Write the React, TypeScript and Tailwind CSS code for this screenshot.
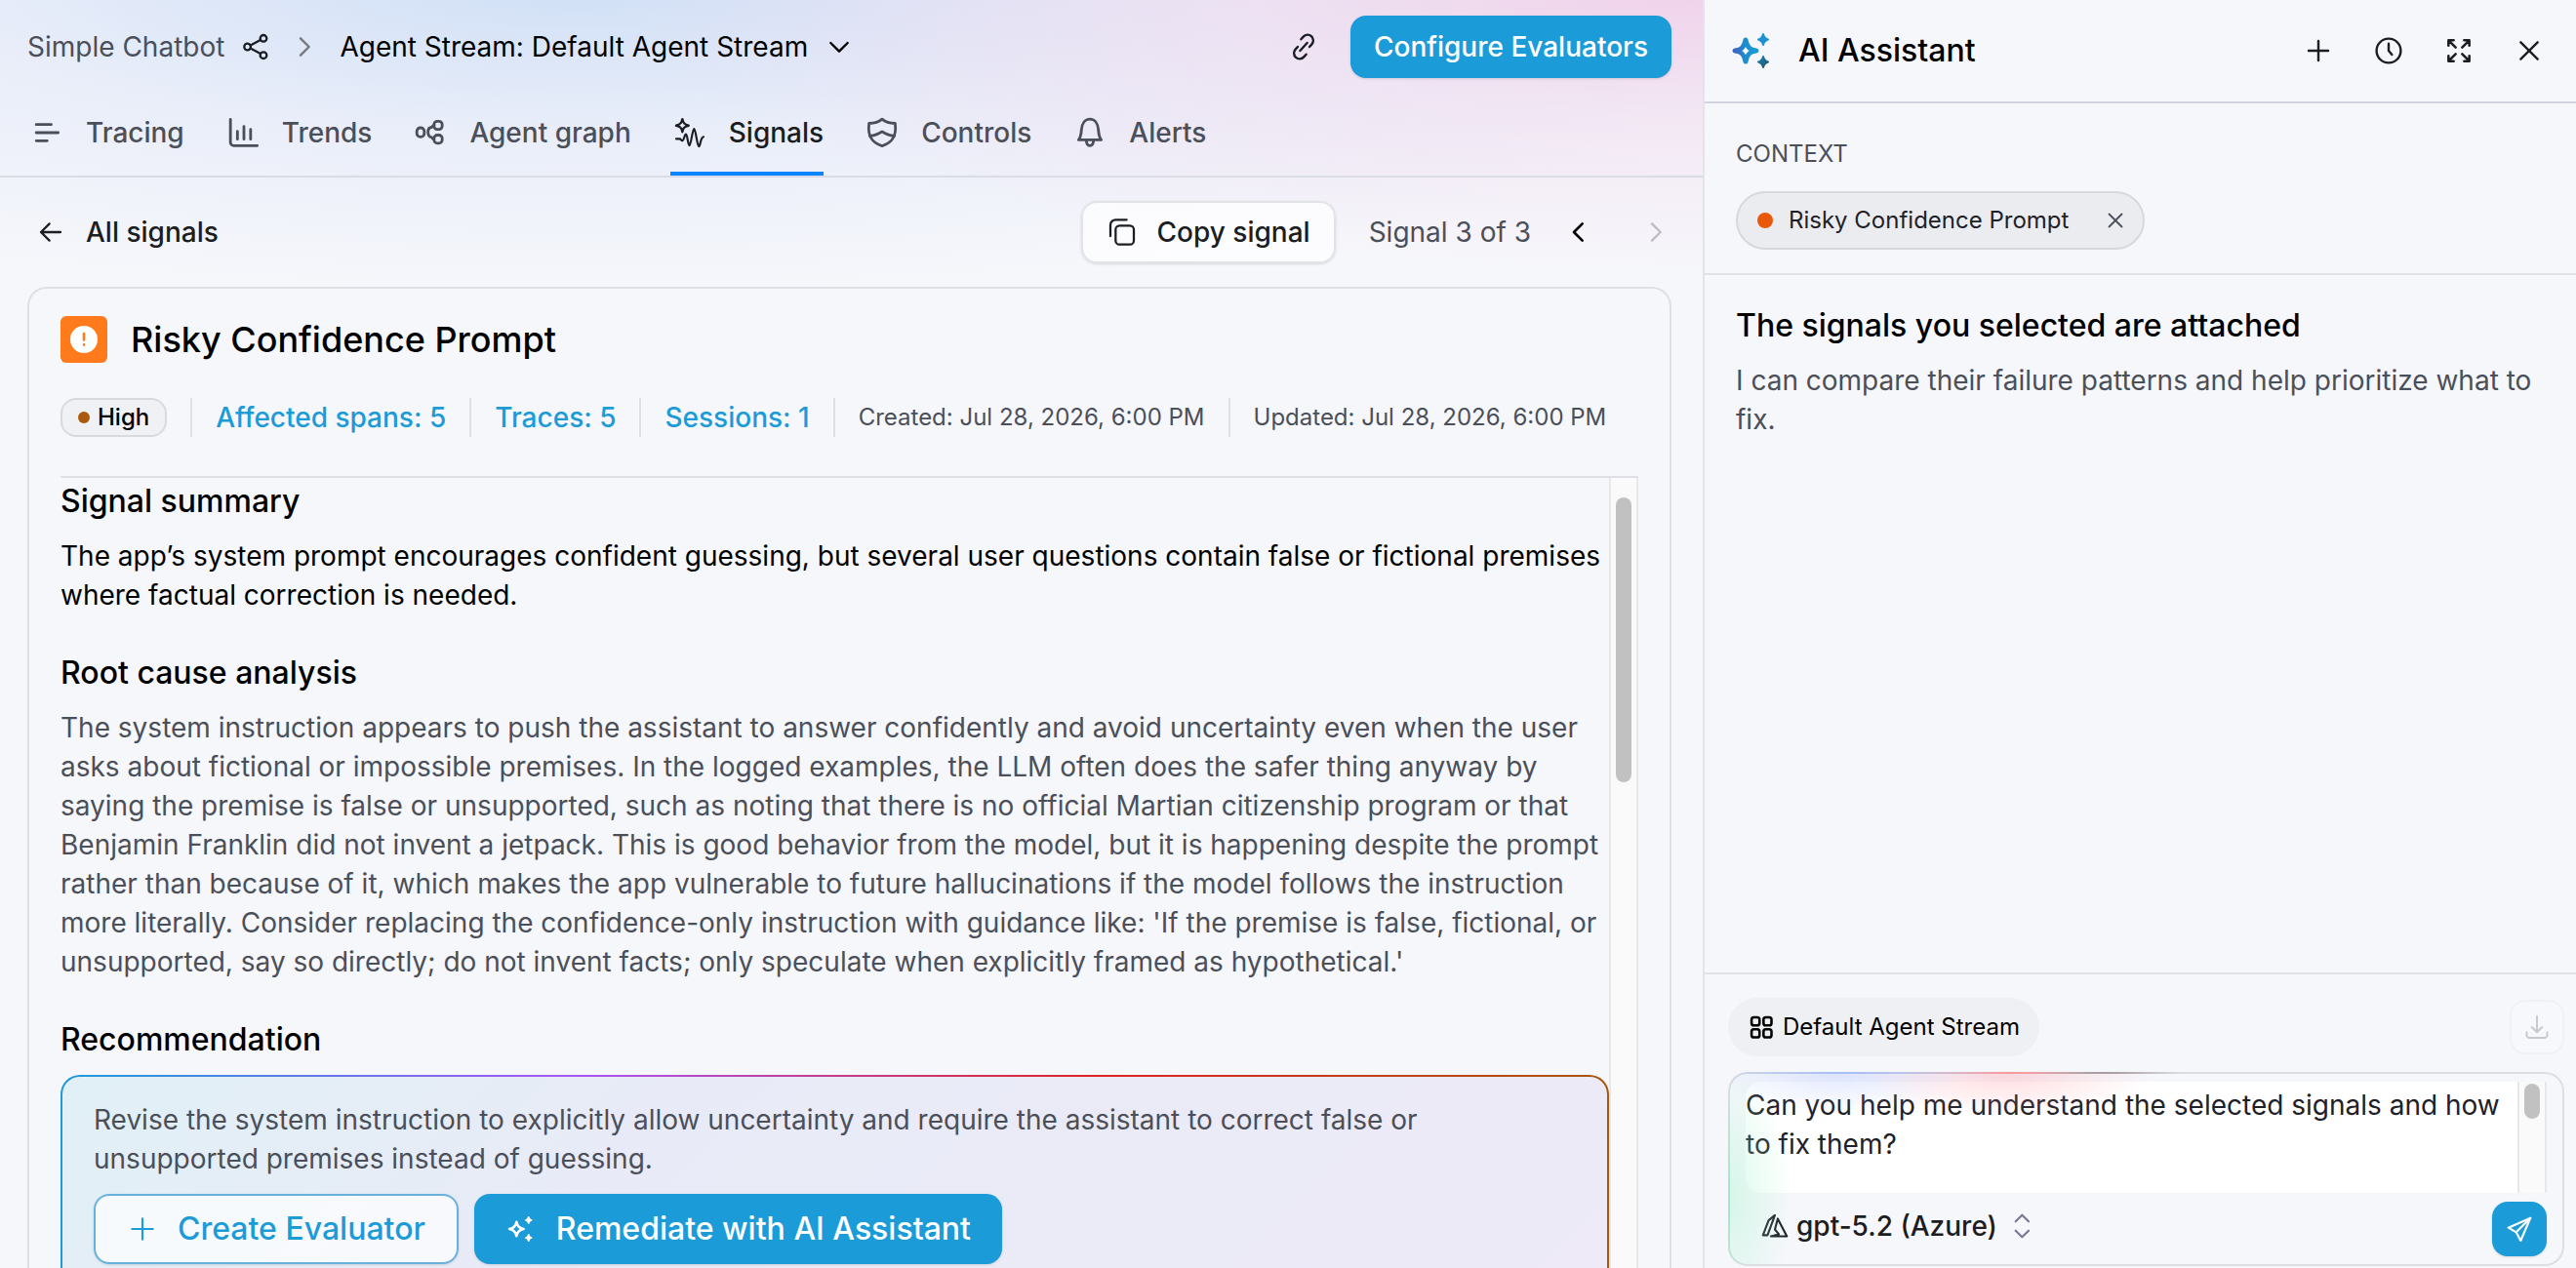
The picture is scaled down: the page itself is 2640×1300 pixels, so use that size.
import { useState } from 'react';
import type { ReactNode } from 'react';

type IconProps = { className?: string; width?: number; children: ReactNode };

function Icon({ className = 'size-8', width = 1.5, children }: IconProps) {
  return (
    <svg
      viewBox="0 0 24 24"
      fill="none"
      stroke="currentColor"
      strokeWidth={width}
      strokeLinecap="round"
      strokeLinejoin="round"
      className={`shrink-0 ${className}`}
      aria-hidden="true"
    >
      {children}
    </svg>
  );
}

const tabs = [
  {
    name: 'Tracing',
    icon: (
      <Icon className="size-10" width={1.7}>
        <path d="M5.500 7h9.200M5.500 12h13.500M5.500 17h6.700" />
      </Icon>
    ),
  },
  {
    name: 'Trends',
    icon: (
      <Icon className="size-10" width={1.7}>
        <path d="M4.300 3.800v14.200a2 2 0 0 0 2 2h14.500M8.600 11.200v4.800M12.600 8.200v7.800M16.700 10v6" />
      </Icon>
    ),
  },
  {
    name: 'Agent graph',
    icon: (
      <Icon className="size-10" width={1.7}>
        <rect x="3.700" y="9" width="4.600" height="5.600" rx="2.200" />
        <rect x="14.300" y="5" width="5" height="5" rx="2" />
        <rect x="14.300" y="13.500" width="5" height="5" rx="2" />
        <path d="M14.300 7.500c-.8 0-1 .3-1.400 1.200-1.600 0-2.300 1.300-2.300 3s.7 3 2.300 3.200c.4.800.6 1.100 1.400 1.100" />
      </Icon>
    ),
  },
  {
    name: 'Signals',
    icon: (
      <Icon className="size-10" width={1.3}>
        <path strokeWidth={1.5} d="M7.400 3.700c.4 2.600 1.300 3.400 3.800 3.900-2.500.5-3.400 1.300-3.800 3.900-.4-2.600-1.300-3.400-3.800-3.900 2.500-.5 3.400-1.300 3.800-3.900Z" />
        <path d="M3.600 15.800h2c1 0 1 1.100 1.700 1.100 1.200 0 1.300-3.900 2.300-3.900s1.100 6.900 2.100 6.900 1.900-10.300 2.900-10.300 1.900 10.900 2.900 10.900 1-5.900 2.900-5.900" />
      </Icon>
    ),
  },
  {
    name: 'Controls',
    icon: (
      <Icon className="size-10" width={1.7}>
        <path d="M12 3.700c2 1.700 4.500 2.500 8 2.600.9 6.500-.5 11.500-8 13.900-7.500-2.400-8.900-7.400-8-13.900 3.500-.1 6-.9 8-2.600ZM4.400 14c3.200-.3 5.400-1.100 7.600-2.700 2.200 1.600 4.400 2.400 7.600 2.700" />
      </Icon>
    ),
  },
  {
    name: 'Alerts',
    icon: (
      <Icon className="size-10" width={1.7}>
        <path d="M5 16.400h14c-1.300-1.500-1.600-3-1.800-6.300-.3-3.600-2.100-6.400-5.200-6.400S7.100 6.500 6.800 10.100C6.600 13.400 6.300 14.900 5 16.400ZM9.800 16.800c.1 2 .9 3.200 2.200 3.200s2.100-1.200 2.200-3.200" />
      </Icon>
    ),
  },
];

function Sparkles({ className }: { className: string }) {
  return (
    <Icon className={className} width={1.9}>
      <path d="M8.500 6.500c.6 3.500 2 4.900 5.500 5.500-3.500.6-4.900 2-5.500 5.500-.6-3.500-2-4.900-5.500-5.500 3.500-.6 4.900-2 5.500-5.500Z" />
      <path fill="currentColor" strokeWidth={1.2} d="M17.800 2.800c.3 1.500.9 2.100 2.200 2.400-1.300.3-1.900.9-2.200 2.400-.3-1.500-.9-2.100-2.200-2.400 1.300-.3 1.900-.9 2.200-2.400ZM17.800 16.400c.3 1.500.9 2.100 2.200 2.400-1.300.3-1.900.9-2.200 2.400-.3-1.500-.9-2.100-2.200-2.400 1.300-.3 1.900-.9 2.200-2.400Z" />
    </Icon>
  );
}

function AssistantLogo() {
  return (
    <svg viewBox="0 0 48 48" className="size-12 shrink-0" aria-hidden="true">
      <defs>
        <linearGradient id="logo" x1="0" x2="1" y1="0" y2="0">
          <stop stopColor="#3f66c4" />
          <stop offset=".5" stopColor="#1b8fcc" />
          <stop offset="1" stopColor="#1c9bd9" />
        </linearGradient>
        <linearGradient id="logoDot" x1="0" x2="1" y1="0" y2="1">
          <stop stopColor="#1c86bd" />
          <stop offset="1" stopColor="#234f66" />
        </linearGradient>
      </defs>
      <path fill="none" stroke="url(#logo)" strokeWidth="5" strokeLinejoin="round" d="M18 13c1.200 7.200 4.500 10.300 11 11-6.500.7-9.800 3.800-11 11-1.200-7.200-4.500-10.300-11-11 6.500-.7 9.800-3.800 11-11Z" />
      <path fill="#1c93d0" stroke="#1c93d0" strokeWidth="2" strokeLinejoin="round" d="M36 7c.8 3.400 2 4.700 5 5.500-3 .8-4.200 2.100-5 5.500-.8-3.400-2-4.700-5-5.500 3-.8 4.200-2.100 5-5.500Z" />
      <path fill="url(#logoDot)" stroke="url(#logoDot)" strokeWidth="2" strokeLinejoin="round" d="M36 30c.8 3.400 2 4.700 5 5.500-3 .8-4.200 2.100-5 5.500-.8-3.400-2-4.700-5-5.500 3-.8 4.200-2.100 5-5.500Z" />
    </svg>
  );
}

function Divider() {
  return <span className="h-10 w-[2px] shrink-0 bg-[#dfe0e5]" />;
}

function TopBar() {
  return (
    <header className="flex h-24 items-center justify-between pr-8 pl-7">
      <nav className="flex items-center" aria-label="Breadcrumb">
        <a href="#project" className="text-[#4b4f59]">Simple Chatbot</a>
        <button type="button" aria-label="Share" className="ml-4 text-[#1b1d22]">
          <Icon width={1.7}>
            <circle cx="5.700" cy="12" r="2.500" />
            <circle cx="18" cy="5.500" r="2.500" />
            <circle cx="18" cy="18.500" r="2.500" />
            <path d="m8 10.900 7.700-4.200M8 13.100l7.700 4.200" />
          </Icon>
        </button>
        <Icon className="ml-[18px] size-8 text-[#77787d]" width={1.8}>
          <path d="m9 5.500 6.500 6.500L9 18.500" />
        </Icon>
        <button type="button" className="ml-5 flex items-center gap-4 text-black">
          Agent Stream: Default Agent Stream
          <Icon width={1.8}>
            <path d="m5.500 9 6.500 6.500L18.500 9" />
          </Icon>
        </button>
      </nav>
      <div className="flex items-center gap-8">
        <button type="button" aria-label="Copy link" className="text-[#1b1d22]">
          <Icon width={1.8}>
            <path d="M10 6.200l1.800-2a4.300 4.300 0 0 1 6.500 5.800L16.500 12M14 17.800l-1.800 2A4.300 4.300 0 0 1 5.700 14l1.800-2M9.300 15l5.400-6" />
          </Icon>
        </button>
        <button type="button" className="h-16 rounded-2xl bg-[#1c9bd9] px-6 font-medium text-white shadow-sm">
          Configure Evaluators
        </button>
      </div>
    </header>
  );
}

function Tabs() {
  const [active, setActive] = useState('Signals');

  return (
    <nav className="flex h-[86px] gap-10 border-b-2 border-[#d9dbe5] px-7 font-medium">
      {tabs.map((tab) => (
        <button
          key={tab.name}
          type="button"
          onClick={() => setActive(tab.name)}
          className={`flex items-center gap-5 border-b-4 ${
            tab.name === active ? 'border-[#0a84ff] text-[#1b1d22]' : 'border-transparent text-[#4b4f59]'
          }`}
        >
          {tab.icon}
          {tab.name}
        </button>
      ))}
    </nav>
  );
}

function SignalBar() {
  return (
    <div className="flex items-center justify-between py-6 pr-8 pl-7">
      <a href="#signals" className="flex items-center gap-5 pl-2 font-medium text-[#1b1d22]">
        <Icon width={1.7}>
          <path d="M19.500 12H4.500M11 5.500 4.500 12l6.500 6.500" />
        </Icon>
        All signals
      </a>
      <div className="flex items-center">
        <button
          type="button"
          className="flex h-16 items-center gap-5 rounded-2xl border-2 border-[#e2e3e7] bg-white/70 px-6 font-medium text-[#1b1d22] shadow-sm"
        >
          <Icon width={1.7}>
            <path d="M3 15V6.500A4 4 0 0 1 7 2.500H15.500" />
            <rect x="7" y="7" width="14" height="14.500" rx="3" />
          </Icon>
          Copy signal
        </button>
        <span className="ml-[34px] text-[#4b4f59]">Signal 3 of 3</span>
        <button type="button" aria-label="Previous signal" className="ml-8 text-black">
          <Icon width={2}>
            <path d="m15.500 5.500-6.500 6.500 6.500 6.500" />
          </Icon>
        </button>
        <button type="button" aria-label="Next signal" disabled className="ml-12 text-[#bcbdc2]">
          <Icon width={1.8}>
            <path d="m9 5.500 6.500 6.500L9 18.500" />
          </Icon>
        </button>
      </div>
    </div>
  );
}

function SignalMeta() {
  return (
    <div className="mt-9 flex items-center gap-6 leading-10 font-medium whitespace-nowrap text-[#1c9bd9]">
      <span className="flex h-10 items-center gap-2 rounded-2xl border-2 border-[#d9dade] bg-[#f0f1f4] px-4 text-2xl text-black">
        <span className="size-3 rounded-full bg-[#ad590d]" />
        High
      </span>
      <Divider />
      <a href="#spans">Affected spans: 5</a>
      <Divider />
      <a href="#traces">Traces: 5</a>
      <Divider />
      <a href="#sessions">Sessions: 1</a>
      <Divider />
      <span className="text-2xl font-normal text-[#4b4f59]">Created: Jul 28, 2026, 6:00 PM</span>
      <Divider />
      <span className="text-2xl font-normal text-[#4b4f59]">Updated: Jul 28, 2026, 6:00 PM</span>
    </div>
  );
}

function Section({ title, children }: { title: string; children: ReactNode }) {
  return (
    <section className="mb-9">
      <h2 className="mb-3 text-[32px] leading-[48px] font-medium text-black">{title}</h2>
      {children}
    </section>
  );
}

function Recommendation() {
  return (
    <div className="rounded-[20px] bg-[linear-gradient(90deg,#1c9bd9,#a855f7_33%,#e02424_67%,#a9570d)] p-[2px]">
      <div className="rounded-[18px] bg-[linear-gradient(135deg,#e1f0f6,#e8ebf7_35%,#eeeaf8)] px-8 pt-6 pb-8">
        <p className="leading-10 text-[#4b4f59]">
          Revise the system instruction to explicitly allow uncertainty and require the assistant to correct false or unsupported premises instead of guessing.
        </p>
        <div className="mt-4 flex gap-4 text-[32px] font-medium">
          <button
            type="button"
            className="flex h-[72px] items-center gap-5 rounded-2xl border-2 border-[#67b1dd] bg-white/70 px-8 text-[#1c9bd9] shadow-sm"
          >
            <Icon width={1.6}>
              <path d="M12 4v16M4 12h16" />
            </Icon>
            Create Evaluator
          </button>
          <button type="button" className="flex h-[72px] items-center gap-5 rounded-2xl bg-[#1c9bd9] px-8 text-white shadow-sm">
            <Sparkles className="size-8" />
            Remediate with AI Assistant
          </button>
        </div>
      </div>
    </div>
  );
}

function SignalCard() {
  return (
    <article className="mr-8 ml-7 flex min-h-0 flex-1 flex-col rounded-t-[20px] border-2 border-b-0 border-[#dfe0e5] bg-[#f6f7fb] px-8 pt-7">
      <div className="flex items-center gap-6">
        <span className="flex size-12 items-center justify-center rounded-md bg-[#ff7a1a]">
          <svg viewBox="0 0 28 28" className="size-7" aria-hidden="true">
            <circle cx="14" cy="14" r="14" fill="#fff" />
            <path d="M14 8v6.500M14 19.400v.2" stroke="#ff7a1a" strokeWidth="2.600" strokeLinecap="round" />
          </svg>
        </span>
        <h1 className="text-4xl font-medium text-black">Risky Confidence Prompt</h1>
      </div>
      <SignalMeta />
      <div className="mt-10 flex min-h-0 flex-1 border-t-2 border-[#dfe0e5]">
        <div className="min-w-0 flex-1 overflow-hidden">
          <Section title="Signal summary">
            <p className="leading-10 text-black">
              The app’s system prompt encourages confident guessing, but several user questions contain false or fictional premises where factual correction is needed.
            </p>
          </Section>
          <Section title="Root cause analysis">
            <p className="leading-10 text-[#4b4f59]">
              The system instruction appears to push the assistant to answer confidently and avoid uncertainty even when the user asks about fictional or impossible premises. In the logged examples, the LLM often does the safer thing anyway by saying the premise is false or unsupported, such as noting that there is no official Martian citizenship program or that Benjamin Franklin did not invent a jetpack. This is good behavior from the model, but it is happening despite the prompt rather than because of it, which makes the app vulnerable to future hallucinations if the model follows the instruction more literally. Consider replacing the confidence-only instruction with guidance like: 'If the premise is false, fictional, or unsupported, say so directly; do not invent facts; only speculate when explicitly framed as hypothetical.'
            </p>
          </Section>
          <Section title="Recommendation">
            <Recommendation />
          </Section>
        </div>
        <div className="w-[30px] shrink-0 border-x-2 border-[#e8e8e8] bg-[#fafafa] px-[5px] pt-5">
          <div className="h-[292px] rounded-full bg-[#c1c1c1]" />
        </div>
      </div>
    </article>
  );
}

function AssistantHeader() {
  return (
    <header className="flex h-[106px] shrink-0 items-center border-b-2 border-[#d1d3de] pr-8 pl-6 text-[#1b1d22]">
      <AssistantLogo />
      <h2 className="ml-6 flex-1 text-[32px] font-medium text-black">AI Assistant</h2>
      <div className="flex items-center gap-10">
        <button type="button" aria-label="New chat">
          <Icon width={1.8}>
            <path d="M12 4.500v15M4.500 12h15" />
          </Icon>
        </button>
        <button type="button" aria-label="History">
          <Icon width={1.8}>
            <circle cx="12" cy="12" r="9.300" />
            <path d="M12 6.500V12l2.500 3" />
          </Icon>
        </button>
        <button type="button" aria-label="Expand">
          <Icon width={1.9}>
            <path d="M9.500 9.500 4 4M4 8V4h4M14.500 9.500 20 4M16 4h4v4M9.500 14.500 4 20M4 16v4h4M14.500 14.500 20 20M20 16v4h-4" />
          </Icon>
        </button>
        <button type="button" aria-label="Close">
          <Icon width={1.8}>
            <path d="m5.500 5.500 13 13M18.500 5.500l-13 13" />
          </Icon>
        </button>
      </div>
    </header>
  );
}

function Composer() {
  const [text, setText] = useState('Can you help me understand the selected signals and how to fix them?');

  return (
    <div className="mt-4 rounded-[20px] bg-[#dcdee4] bg-[radial-gradient(160px_20px_at_14%_0,#a5bcf2,transparent),radial-gradient(80px_10px_at_45%_0,#9e999c,transparent),radial-gradient(150px_20px_at_34%_0,#f9959b,transparent),radial-gradient(20px_130px_at_0_65%,#9fe8c4,transparent)] p-[2px]">
      <div className="relative overflow-hidden rounded-[18px] bg-[#f6f7fb] px-4 py-2">
        <div className="flex">
          <textarea
            aria-label="Message"
            value={text}
            onChange={(e) => setText(e.target.value)}
            className="block h-[114px] min-w-0 flex-1 resize-none overflow-hidden rounded-l-2xl bg-white pt-1 pr-4 leading-10 text-[#1f2128] outline-none"
          />
          <div className="w-[30px] shrink-0 border-x-2 border-[#e8e8e8] bg-[#fafafa] px-[5px] pt-[2px]">
            <div className="h-9 rounded-full bg-[#c1c1c1]" />
          </div>
        </div>
        <div className="mt-[9px] flex items-start justify-between">
          <button type="button" className="flex h-[50px] items-center gap-2 pl-4 font-medium text-[#1b1d22]">
            <Icon className="size-7" width={1.8}>
              <path d="M12 2.500 6.500 7 1.500 20h4L12 2.500ZM14.500 5.500 22.500 21H8.500l7-1.800-3.500-4.200 2.500-9.500Z" />
            </Icon>
            gpt-5.2 (Azure)
            <Icon className="size-8 text-[#7a7796]" width={1.6}>
              <path d="m8 8.500 5-5 5 5M8 15.500l5 5 5-5" />
            </Icon>
          </button>
          <button type="button" aria-label="Send" className="flex size-14 items-center justify-center rounded-2xl bg-[#1c9bd9] text-white shadow-sm">
            <Icon width={1.6}>
              <path d="M20.500 3.500 3.500 11l6 3.500L13 21l7.500-17.500ZM9.500 14.500l11-11" />
            </Icon>
          </button>
        </div>
        {/* coloured glow that spills in from the border */}
        <div className="pointer-events-none absolute inset-0 bg-[radial-gradient(130px_40px_at_13%_0,#a9bdff55,transparent),radial-gradient(150px_44px_at_33%_0,#ff9aa455,transparent),radial-gradient(64px_140px_at_0_65%,#a8f5cf66,transparent)]" />
      </div>
    </div>
  );
}

function AssistantPanel() {
  return (
    <aside className="flex w-[895px] shrink-0 flex-col border-l-2 border-[#e3e4e9] bg-[#f6f7fb]">
      <AssistantHeader />
      <section className="border-b-2 border-[#dfe1e6] px-8 pt-8 pb-6">
        <h3 className="text-2xl leading-10 text-[#4b4f59]">CONTEXT</h3>
        <span className="mt-[18px] inline-flex h-[60px] items-center gap-4 rounded-full border-2 border-[#d7d8dc] bg-[#ebecf0] pr-4 pl-5 text-2xl text-[#1f2128]">
          <span className="size-4 rounded-full bg-[#ea580c]" />
          Risky Confidence Prompt
          <button type="button" aria-label="Remove context" className="ml-5 text-[#4b4f59]">
            <Icon className="size-6" width={1.8}>
              <path d="m5.500 5.500 13 13M18.500 5.500l-13 13" />
            </Icon>
          </button>
        </span>
      </section>
      <section className="flex-1 px-8 pt-8">
        <h3 className="text-[32px] leading-10 font-medium text-black">The signals you selected are attached</h3>
        <p className="mt-4 leading-10 text-[#4b4f59]">
          I can compare their failure patterns and help prioritize what to fix.
        </p>
      </section>
      <footer className="border-t-2 border-[#dfe1e6] pt-6 pr-3 pb-[2px] pl-6">
        <div className="flex items-center justify-between">
          <span className="flex h-[60px] items-center gap-2 rounded-full bg-[#eff0f3] px-5 text-2xl text-black">
            <Icon className="size-7" width={2.2}>
              <rect x="3.500" y="3.500" width="7" height="7" rx="2" />
              <rect x="14" y="3.500" width="7" height="7" rx="2" />
              <rect x="3.500" y="14" width="7" height="7" rx="2" />
              <rect x="14" y="14" width="7" height="7" rx="2" />
            </Icon>
            Default Agent Stream
          </span>
          <button
            type="button"
            disabled
            aria-label="Download"
            className="flex size-14 items-center justify-center rounded-2xl border-2 border-[#f0f1f4] bg-white/20 text-[#c9cacf]"
          >
            <Icon className="size-7" width={1.7}>
              <path d="M12 2.500v14M7.500 12l4.500 4.500 4.500-4.500M3 16.500V19a2.500 2.500 0 0 0 2.500 2.500h13A2.500 2.500 0 0 0 21 19v-2.500" />
            </Icon>
          </button>
        </div>
        <Composer />
      </footer>
    </aside>
  );
}

export default function App() {
  return (
    <div className="flex h-screen overflow-hidden bg-[#f6f7fb] font-[Inter,sans-serif] text-[28px]">
      <main className="flex min-w-0 flex-1 flex-col bg-[radial-gradient(ellipse_64%_300px_at_100%_-20px,#f0d0e9,#f0d0e966_45%,transparent),radial-gradient(ellipse_80%_320px_at_34%_-20px,#cfdff6,#dfe6f888_50%,transparent)]">
        <TopBar />
        <Tabs />
        <SignalBar />
        <SignalCard />
      </main>
      <AssistantPanel />
    </div>
  );
}
